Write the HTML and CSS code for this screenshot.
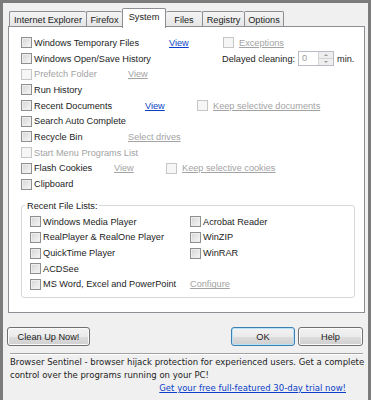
FILE: index.html
```html
<!DOCTYPE html>
<html lang="en">
<head>
  <meta charset="UTF-8" />
  <title>Cleaner Options - System</title>
  <link rel="stylesheet" href="styles.css">
</head>
<body>
  <div class="dialog">
    <div class="tabs">
      <div class="tab t-ie">Internet Explorer</div>
      <div class="tab t-ff">Firefox</div>
      <div class="tab t-sys active">System</div>
      <div class="tab t-files">Files</div>
      <div class="tab t-reg">Registry</div>
      <div class="tab t-opt last">Options</div>
    </div>

    <div class="panel">
      <div class="row">
        <label class="opt w148"><span class="cb"></span>Windows Temporary Files</label>
        <a class="link w54">View</a>
        <label class="opt sub off"><span class="cb"></span><a class="link dim">Exceptions</a></label>
      </div>
      <div class="row">
        <label class="opt w201"><span class="cb"></span>Windows Open/Save History</label>
        <span>Delayed cleaning:</span>
        <span class="spin">
          <span class="spin-val">0</span>
          <span class="spin-btns"><span class="up"></span><span class="down"></span></span>
        </span>
        <span class="unit">min.</span>
      </div>
      <div class="row">
        <label class="opt w107 off"><span class="cb"></span>Prefetch Folder</label>
        <a class="link dim">View</a>
      </div>
      <div class="row">
        <label class="opt"><span class="cb"></span>Run History</label>
      </div>
      <div class="row">
        <label class="opt w124"><span class="cb"></span>Recent Documents</label>
        <a class="link w52">View</a>
        <label class="opt sub off"><span class="cb"></span><a class="link dim">Keep selective documents</a></label>
      </div>
      <div class="row">
        <label class="opt"><span class="cb"></span>Search Auto Complete</label>
      </div>
      <div class="row">
        <label class="opt w107"><span class="cb"></span>Recycle Bin</label>
        <a class="link dim">Select drives</a>
      </div>
      <div class="row">
        <label class="opt off"><span class="cb"></span>Start Menu Programs List</label>
      </div>
      <div class="row">
        <label class="opt w93"><span class="cb"></span>Flash Cookies</label>
        <a class="link dim w52">View</a>
        <label class="opt sub off"><span class="cb"></span><a class="link dim">Keep selective cookies</a></label>
      </div>
      <div class="row">
        <label class="opt"><span class="cb"></span>Clipboard</label>
      </div>

      <fieldset class="group">
        <legend>Recent File Lists:</legend>
        <label class="row opt"><span class="cb"></span>Windows Media Player</label>
        <label class="row opt"><span class="cb"></span>Acrobat Reader</label>
        <label class="row opt"><span class="cb"></span>RealPlayer &amp; RealOne Player</label>
        <label class="row opt"><span class="cb"></span>WinZIP</label>
        <label class="row opt"><span class="cb"></span>QuickTime Player</label>
        <label class="row opt"><span class="cb"></span>WinRAR</label>
        <label class="row opt"><span class="cb"></span>ACDSee</label>
        <div class="row"></div>
        <label class="row opt"><span class="cb"></span>MS Word, Excel and PowerPoint</label>
        <div class="row"><a class="link dim">Configure</a></div>
      </fieldset>
    </div>

    <div class="buttons">
      <button class="btn w-clean">Clean Up Now!</button>
      <div class="spacer"></div>
      <button class="btn def w-ok">OK</button>
      <button class="btn w-help">Help</button>
    </div>

    <div class="footer">
      Browser Sentinel - browser hijack protection for experienced users. Get a complete<br>
      control over the programs running on your PC!
      <a class="trial">Get your free full-featured 30-day trial now!</a>
    </div>
  </div>
</body>
</html>
```

FILE: styles.css
```css
* { box-sizing: border-box; }

body {
  margin: 0;
  background: #f0f0f0;
  font-family: "Liberation Sans", Arial, sans-serif;
  font-size: 9.2px;
  color: #1c1c1c;
}

.dialog {
  width: 371px;
  height: 400px;
  border: 3px solid #7b7b7b;
  border-bottom: none;
  padding: 5px 3px 0 5px;
  overflow: hidden;
}

/* tab strip */
.tabs {
  display: flex;
  align-items: flex-end;
  height: 20px;
  margin: 0 0 -2px 1px;
  position: relative;
  z-index: 1;
}

.tab {
  height: 15px;
  margin-bottom: 2px;
  border: 1px solid #8c8e94;
  border-bottom: none;
  border-right: none;
  border-radius: 2px 2px 0 0;
  background: linear-gradient(#f4f4f4, #e6e6e6);
  display: flex;
  align-items: center;
  justify-content: center;
  padding-top: 1px;
}

.tab.last { border-right: 1px solid #8c8e94; }

.tab.active {
  height: 20px;
  margin-bottom: 0;
  background: #fff;
  border-right: 1px solid #8c8e94;
  align-items: flex-start;
  padding-top: 3px;
}

.t-ie { width: 77px; }
.t-ff { width: 36px; }
.t-sys { width: 44px; }
.t-files { width: 36px; border-left: none; }
.t-reg { width: 42px; }
.t-opt { width: 40px; }

/* main page */
.panel {
  height: 287px;
  border: 1px solid #8c8e94;
  background: #fff;
  padding: 8px 0 0 12px;
}

.row {
  display: flex;
  align-items: center;
  height: 15.7px;
  white-space: nowrap;
}

.opt {
  display: flex;
  align-items: center;
}

.cb {
  width: 11px;
  height: 11px;
  flex: none;
  margin-right: 2px;
  border: 1px solid #8e8f8f;
  background: linear-gradient(135deg, #d4d4d4, #f7f7f7);
  box-shadow: inset 0 0 0 1px #eeeeee;
}

.sub .cb { margin-right: 5px; }

.off { color: #a3a3a3; }

.off .cb {
  border-color: #c6c6c6;
  background: #f6f6f6;
  box-shadow: none;
}

.link {
  color: #0b3fc9;
  text-decoration: underline;
}

.link.dim { color: #a3a3a3; }

.w52 { width: 52px; }
.w54 { width: 54px; }
.w93 { width: 93px; }
.w107 { width: 107px; }
.w124 { width: 124px; }
.w148 { width: 148px; }
.w201 { width: 201px; }

.spin {
  display: flex;
  width: 36px;
  height: 15px;
  margin-left: 3px;
  border: 1px solid #b9bcc2;
  background: #fff;
}

.spin-val {
  flex: 1;
  padding-left: 3px;
  color: #9a9a9a;
  line-height: 13px;
}

.spin-btns {
  width: 15px;
  display: flex;
  flex-direction: column;
  border-left: 1px solid #d4d4d4;
}

.spin-btns span {
  flex: 1;
  background: #eeeeee;
  display: flex;
  align-items: center;
  justify-content: center;
}

.spin-btns .up { border-bottom: 1px solid #d4d4d4; }

.spin-btns .up::after,
.spin-btns .down::after {
  content: "";
  border-left: 2px solid transparent;
  border-right: 2px solid transparent;
}

.spin-btns .up::after { border-bottom: 2px solid #9a9a9a; }
.spin-btns .down::after { border-top: 2px solid #9a9a9a; }

.unit { margin-left: 3px; }

/* recent file lists box */
.group {
  margin: 9px 0 0 0;
  width: 334px;
  min-width: 0;
  border: 1px solid #d3d8dd;
  border-radius: 3px;
  padding: 3px 0 5px 8px;
  display: grid;
  grid-template-columns: 160px auto;
}

.group legend {
  padding: 0 2px;
  margin-left: -5px;
}

/* buttons */
.buttons {
  display: flex;
  gap: 3px;
  margin: 14px 2px 0 -1px;
}

.spacer { flex: 1; }

.btn {
  height: 19px;
  padding: 0;
  border: 1px solid #707070;
  border-radius: 3px;
  background: linear-gradient(#f2f2f2 0%, #ebebeb 50%, #dddddd 51%, #cfcfcf 100%);
  box-shadow: inset 0 0 0 1px #fbfbfb;
  font: inherit;
  color: #1c1c1c;
}

.btn.def {
  border-color: #3c7fb1;
  box-shadow: inset 0 0 0 1px #b8e2f7;
}

.w-clean { width: 83px; }
.w-ok { width: 64px; }
.w-help { width: 65px; }

/* footer */
.footer {
  margin: 7px 2px 0 2px;
  padding-top: 2px;
  border-top: 1px solid #a0a0a0;
  box-shadow: inset 0 1px 0 #fff;
  font-family: "DejaVu Sans", Tahoma, sans-serif;
  font-size: 8.5px;
  line-height: 13px;
  white-space: nowrap;
}

.trial {
  display: block;
  text-align: right;
  padding-right: 17px;
  color: #0b3fc9;
  text-decoration: underline;
}
```
